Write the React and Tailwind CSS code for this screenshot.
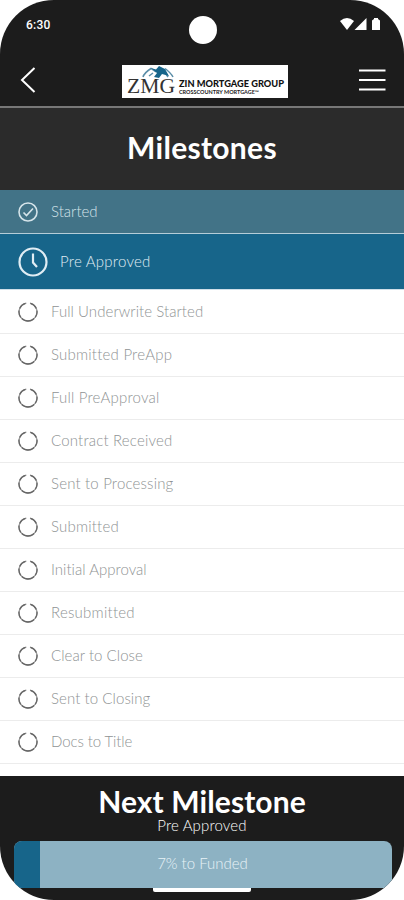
const milestones = [
    { text: "Full Underwrite Started", tracking: "tracking-[0.06px]" },
    { text: "Submitted PreApp", tracking: "tracking-[0.22px]" },
    { text: "Full PreApproval", tracking: "tracking-[0.2px]" },
    { text: "Contract Received", tracking: "tracking-[0.18px]" },
    { text: "Sent to Processing", tracking: "tracking-[0.18px]" },
    { text: "Submitted", tracking: "tracking-[0.2px]" },
    { text: "Initial Approval", tracking: "tracking-[0.02px]" },
    { text: "Resubmitted", tracking: "tracking-[0.25px]" },
    { text: "Clear to Close", tracking: "tracking-[0.05px]" },
    { text: "Sent to Closing", tracking: "tracking-[0.08px]" },
    { text: "Docs to Title", tracking: "-tracking-[0.1px]" },
];

const App = () => (
    <div className="flex flex-col w-[404px] h-[900px] overflow-hidden rounded-[54px] bg-white font-['Lato',sans-serif]">
        <StatusBar />
        <NavBar />
        <div className="flex items-center justify-center h-[82px] pb-[3px] bg-[#2b2b2b] text-white text-[30px] font-bold tracking-[0.3px]">Milestones</div>
        <div className="flex items-center h-11 pl-[18px] gap-[13px] bg-[#427387] border-b border-[#b5cdd8] text-[#d5e4ea] text-[15px] font-light">
            <CheckIcon />
            Started
        </div>
        <div className="flex items-center h-14 pl-[18px] gap-3 bg-[#17658a] border-b border-[#d0dfe8] text-[#e0edf4] text-[15px] font-light tracking-[0.25px]">
            <ClockIcon />
            Pre Approved
        </div>
        <div className="flex-1 pt-px overflow-hidden">
            {milestones.map((m) => (
                <div key={m.text} className="flex items-center h-[43px] pl-[18px] gap-[13px] border-b border-[#ececec] text-[#8f9394] text-[15px] font-light">
                    <OpenIcon />
                    <span className={`pb-0.5 ${m.tracking}`}>{m.text}</span>
                </div>
            ))}
        </div>
        <Footer />
    </div>
);

export default App;

const StatusBar = () => (
    <div className="flex justify-between h-12 pl-[26px] pr-[22px] bg-[#1c1c1c] text-white">
        <div className="flex-1 pt-[17px] text-[12px] leading-4 font-medium font-['Roboto',sans-serif] tracking-[0.2px]">6:30</div>
        <div className="size-7 mt-4 mr-[3px] rounded-full bg-white" />
        <div className="flex flex-1 justify-end pt-[17px]">
            <svg width="42" height="15" fill="currentColor">
                <path d="M0 4Q7 -2 14 4L7 13Z" />
                <path d="M26.500 1V13H14.500Z" />
                <path d="M32 3.500L34 2V1h4v1l2 1.500v9.500h-8Z" />
            </svg>
        </div>
    </div>
);

const NavBar = () => (
    <header className="flex items-center h-[60px] pt-[6px] pl-5 pr-[18px] bg-[#1c1c1c] text-white border-b-2 border-[#777777]">
        <div className="flex-1">
            <svg width="16" height="28" fill="none" stroke="currentColor" strokeWidth="2">
                <path d="M14.500 2L2 14L14.500 26" />
            </svg>
        </div>
        <Logo />
        <div className="flex flex-1 justify-end">
            <svg width="28" height="24" stroke="currentColor" strokeWidth="2">
                <path d="M1 2.500h26.500M1 12h26.500M1 21.500h26.500" />
            </svg>
        </div>
    </header>
);

const Logo = () => (
    <svg className="ml-1 mt-[3px]" width="166" height="33" viewBox="0 0 166 33">
        <rect width="166" height="33" fill="#fff" />
        <text x="5" y="28" fontSize="21" textLength="48" lengthAdjust="spacingAndGlyphs" fill="#333" className="font-['Liberation_Serif',serif]">ZMG</text>
        <path d="M21 12Q22 8 29 3.500L34 7M27 11L31 8M51 12Q49 8 43 3.500M46 12L44 9" fill="none" stroke="#5b8ea8" strokeWidth="1.500" />
        <path d="M29 3L34 4.500L37 1L43 4L47 11L40 9L37 13L32 12L35 8Z" fill="#17658a" />
        <text x="57" y="21.500" fontSize="9.500" fontWeight="900" textLength="105" lengthAdjust="spacingAndGlyphs" fill="#111">ZIN MORTGAGE GROUP</text>
        <text x="57" y="28.500" fontSize="5" fontWeight="700" textLength="80" lengthAdjust="spacingAndGlyphs" fill="#222">CROSSCOUNTRY MORTGAGE™</text>
    </svg>
);

const CheckIcon = () => (
    <svg width="20" height="20" fill="none" stroke="currentColor" strokeWidth="1.600">
        <circle cx="10" cy="10" r="9" />
        <path d="M5.500 10.500L8.500 13.500L15 6.500" />
    </svg>
);

const ClockIcon = () => (
    <svg width="30" height="30" fill="none" stroke="currentColor" strokeWidth="2.200">
        <circle cx="15" cy="15" r="13.500" />
        <path d="M15 6.500V15.500L19 20" />
    </svg>
);

// ring with a break at the top and fainter joints down the sides
const OpenIcon = () => (
    <svg width="20" height="20" fill="none" strokeWidth="1.300">
        <circle cx="10" cy="10" r="9" stroke="#9a9a9a" strokeDasharray="52.550 4" transform="rotate(-77.300 10 10)" />
        <path d="M12.500 1.350A9 9 0 0 1 18.300 6.500M18.900 8.500A9 9 0 0 1 17.200 15.400M16.200 16.500A9 9 0 0 1 3.800 16.500M2.800 15.400A9 9 0 0 1 1.100 8.500M1.700 6.500A9 9 0 0 1 7.500 1.350" stroke="#666666" />
    </svg>
);

const Footer = () => (
    <footer className="flex flex-col items-center h-[124px] bg-[#1c1c1c] text-white">
        <div className="mt-[7px] text-[30px] leading-9 font-bold tracking-[0.1px]">Next Milestone</div>
        <div className="-mt-[4px] text-[15px] leading-5 font-light tracking-[0.15px]">Pre Approved</div>
        <div className="flex w-[378px] h-[47px] mt-[6px] ml-px rounded-lg overflow-hidden bg-[#8db2c3]">
            <div className="w-[26px] bg-[#17658a]" />
            <div className="flex-1 pr-[26px] text-center text-[15px] leading-[45px] font-light text-[#e8f2f7]">7% to Funded</div>
        </div>
        <div className="w-[98px] h-1 rounded-b-xs bg-white" />
    </footer>
);
